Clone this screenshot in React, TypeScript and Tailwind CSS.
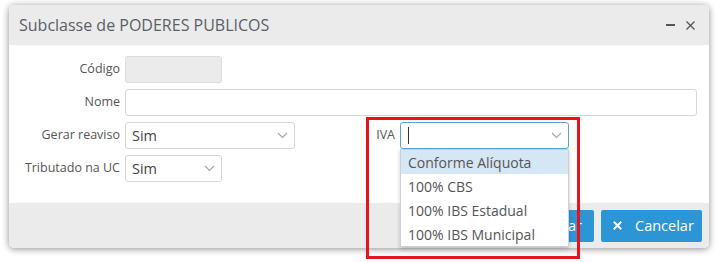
import React from "react";

const Chevron = () => (
  <svg width="11" height="7" viewBox="0 0 11 7" className="shrink-0">
    <path d="M1 1 L5.5 5.5 L10 1" fill="none" stroke="#a8a8a8" strokeWidth="1.1" />
  </svg>
);

const Label = ({ children, w = "w-[116px]" }: { children: React.ReactNode; w?: string }) => (
  <div className={`${w} shrink-0 text-right text-[12.5px] text-[#555] pr-[5px]`}>{children}</div>
);

export default function App() {
  return (
    <div
      className="relative w-[720px] h-[262px] bg-white overflow-hidden"
      style={{ fontFamily: '"Open Sans", "Noto Sans", sans-serif' }}
    >
      <div className="absolute left-[9px] top-[5px] w-[700px] h-[243px] rounded-[5px] bg-white shadow-[0_1px_7px_rgba(0,0,0,0.45)] flex flex-col overflow-visible">
        {/* header */}
        <div className="h-[40px] bg-[#ebebeb] rounded-t-[5px] flex items-center pl-[10px] pr-[14px]">
          <div className="text-[16px] text-[#5a5f66] flex-1">Subclasse de PODERES PUBLICOS</div>
          <div className="flex items-center gap-[11px]">
            <div className="w-[9px] h-[2px] bg-[#555]" />
            <svg width="9" height="9" viewBox="0 0 9 9">
              <path d="M0.5 0.5 L8.5 8.5 M8.5 0.5 L0.5 8.5" stroke="#555" strokeWidth="1.3" />
            </svg>
          </div>
        </div>
        {/* body */}
        <div className="flex-1 flex flex-col gap-[6px] pt-[11px]">
          <div className="flex items-center">
            <Label>Código</Label>
            <div className="w-[97px] h-[27px] rounded-[3px] bg-[#ebebeb] border border-[#dcdcdc]" />
          </div>
          <div className="flex items-center">
            <Label>Nome</Label>
            <div className="w-[572px] h-[27px] rounded-[3px] bg-white border border-[#d6d6d6]" />
          </div>
          <div className="flex items-center">
            <Label>Gerar reaviso</Label>
            <div className="w-[170px] h-[27px] rounded-[3px] bg-white border border-[#d6d6d6] flex items-center pl-[6px] pr-[6px]">
              <span className="flex-1 text-[14.5px] text-[#444]">Sim</span>
              <Chevron />
            </div>
            <Label w="w-[105px]">IVA</Label>
            <div className="relative w-[169px] h-[27px] rounded-[3px] bg-white border border-[#5aa2d6] flex items-center pl-[7px] pr-[6px]">
              <span className="flex-1 flex items-center">
                <span className="w-px h-[17px] bg-[#333]" />
              </span>
              <Chevron />
              {/* dropdown list */}
              <div className="absolute left-[-1px] top-[26px] w-[169px] bg-white border border-[#cfcfcf] shadow-[0_2px_4px_rgba(0,0,0,0.2)] z-10 text-[14px] text-[#555]">
                <div className="h-[24px] flex items-center pl-[7px] bg-[#d5e6f5]">Conforme Alíquota</div>
                <div className="h-[24px] flex items-center pl-[7px]">100% CBS</div>
                <div className="h-[24px] flex items-center pl-[7px]">100% IBS Estadual</div>
                <div className="h-[24px] flex items-center pl-[7px]">100% IBS Municipal</div>
              </div>
            </div>
          </div>
          <div className="flex items-center">
            <Label>Tributado na UC</Label>
            <div className="w-[97px] h-[27px] rounded-[3px] bg-white border border-[#d6d6d6] flex items-center pl-[6px] pr-[6px]">
              <span className="flex-1 text-[14.5px] text-[#444]">Sim</span>
              <Chevron />
            </div>
          </div>
        </div>
        {/* footer */}
        <div className="h-[45px] bg-[#ebebeb] rounded-b-[5px] flex items-center justify-end gap-[7px] pr-[7px]">
          <button className="h-[32px] px-[12px] rounded-[2px] bg-[#2b95d6] text-white text-[14.5px] flex items-center gap-[10px]">
            <svg width="12" height="10" viewBox="0 0 12 10">
              <path d="M1 5 L4.5 8.5 L11 1.5" fill="none" stroke="white" strokeWidth="2" />
            </svg>
            Salvar
          </button>
          <button className="h-[32px] w-[101px] pl-[12px] rounded-[2px] bg-[#2b95d6] text-white text-[14.5px] flex items-center gap-[13px]">
            <svg width="9" height="9" viewBox="0 0 9 9">
              <path d="M0.8 0.8 L8.2 8.2 M8.2 0.8 L0.8 8.2" stroke="white" strokeWidth="2" />
            </svg>
            Cancelar
          </button>
        </div>
      </div>
      {/* annotation */}
      <div className="absolute left-[366px] top-[117px] w-[214px] h-[142px] border-[3px] border-[#e5141b] z-20 pointer-events-none" />
    </div>
  );
}
